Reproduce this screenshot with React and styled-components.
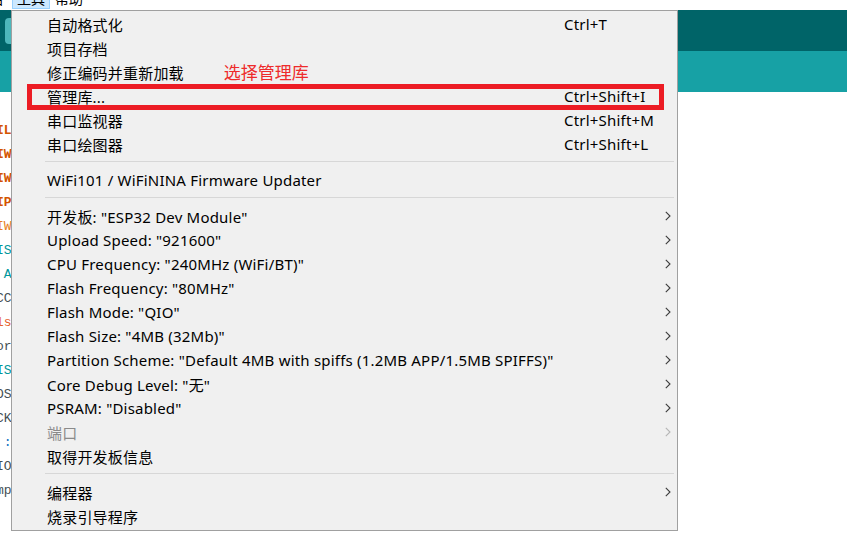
import React from "react";
import styled, { createGlobalStyle } from "styled-components";

const Global = createGlobalStyle`
  html, body { margin: 0; padding: 0; background: #ffffff; }
  body { font-family: "Noto Sans", "Noto Sans CJK SC", sans-serif; }
`;

const Window = styled.div`
  position: relative;
  width: 847px;
  height: 537px;
  overflow: hidden;
  display: flex;
  flex-direction: column;
  background: #ffffff;
`;

const MenuBar = styled.div`
  margin-top: -14px;
  height: 24px;
  flex: none;
  display: flex;
  align-items: flex-start;
  background: #ffffff;
  font-family: "Noto Sans CJK SC", sans-serif;
  font-size: 14px;
  color: #000;
`;

const MenuTitle = styled.div`
  display: flex;
  align-items: center;
  box-sizing: border-box;
  height: 23px;
  padding: 0 ${(p) => p.$pad}px;
  margin-left: ${(p) => p.$ml || 0}px;
  background: ${(p) => (p.$active ? "#cce8ff" : "transparent")};
  border: 1px solid ${(p) => (p.$active ? "#99d1ff" : "transparent")};
`;

const Toolbar = styled.div`
  height: 41px;
  flex: none;
  background: #006468;
  display: flex;
  align-items: center;
  padding-left: 5px;
`;

const ToolButton = styled.div`
  width: 26px;
  height: 26px;
  border-radius: 4px;
  background: #4db7bb;
`;

const TabStrip = styled.div`
  height: 41px;
  flex: none;
  background: #17a1a5;
`;

const Editor = styled.div`
  flex: 1;
  background: #ffffff;
  padding-top: 27px;
  display: flex;
  flex-direction: column;
`;

const CodeLine = styled.div`
  height: 24px;
  line-height: 24px;
  font-family: "Liberation Mono", monospace;
  font-size: 13px;
  white-space: pre;
  margin-left: -4px;
  color: ${(p) => p.$c || "#434f54"};
  font-weight: ${(p) => (p.$b ? 700 : 400)};
`;

const Dropdown = styled.div`
  position: absolute;
  left: 11px;
  top: 10px;
  width: 667px;
  box-sizing: border-box;
  background: #f0f0f0;
  border: 1px solid #a0a0a0;
  padding: 1px 0 2px 0;
  display: flex;
  flex-direction: column;
  font-family: "Noto Sans", "Noto Sans CJK SC", sans-serif;
  font-size: 15px;
  letter-spacing: 0.2px;
  color: #000;
`;

const Item = styled.div`
  display: grid;
  grid-template-columns: 35px 517px 98px 15px;
  height: 24px;
  align-items: center;
  color: ${(p) => (p.$disabled ? "#8a8a8a" : "#000")};
`;

const Label = styled.div`
  grid-column: 2;
  white-space: nowrap;
  display: flex;
  align-items: center;
`;

const Shortcut = styled.div`
  grid-column: 3;
  white-space: nowrap;
`;

const ArrowCell = styled.div`
  grid-column: 4;
  display: flex;
  align-items: center;
  justify-content: flex-start;
  padding-left: 3px;
`;

const Separator = styled.div`
  height: 1px;
  margin: 5px 3px 6px 33px;
  background: #d7d7d7;
`;

const Note = styled.span`
  margin-left: 40px;
  color: #ee2b2b;
  font-family: "Noto Sans CJK SC", sans-serif;
  font-size: 17px;
  letter-spacing: 0;
  line-height: 1;
  margin-top: -2px;
`;

const Highlight = styled.div`
  position: absolute;
  left: 27px;
  top: 84px;
  width: 637px;
  height: 26px;
  box-sizing: border-box;
  border: 5px solid #ec1c24;
  pointer-events: none;
`;

const Chevron = ({ disabled }) => (
  <svg width="6" height="10" viewBox="0 0 6 10">
    <path d="M0.8 0.8 L5 5 L0.8 9.2" fill="none" stroke={disabled ? "#b5b5b5" : "#3c3c3c"} strokeWidth="1.1" />
  </svg>
);

const codeLines = [
  { t: "IL", c: "#d35400", b: true },
  { t: "IW", c: "#d35400", b: true },
  { t: "IW", c: "#d35400", b: true },
  { t: "IP", c: "#d35400", b: true },
  { t: "IW", c: "#e67e22" },
  { t: "IS", c: "#00979c" },
  { t: " A", c: "#00979c" },
  { t: "CC", c: "#434f54" },
  { t: "ls", c: "#e6612a" },
  { t: "or", c: "#434f54" },
  { t: "IS", c: "#00979c" },
  { t: "OS", c: "#434f54" },
  { t: "CK", c: "#434f54" },
  { t: " :", c: "#0a6fc2" },
  { t: "IO", c: "#434f54" },
  { t: "mp", c: "#434f54" },
];

const groups = [
  [
    { label: "自动格式化", sc: "Ctrl+T" },
    { label: "项目存档" },
    { label: "修正编码并重新加载", note: "选择管理库" },
    { label: "管理库...", sc: "Ctrl+Shift+I" },
    { label: "串口监视器", sc: "Ctrl+Shift+M" },
    { label: "串口绘图器", sc: "Ctrl+Shift+L" },
  ],
  [{ label: "WiFi101 / WiFiNINA Firmware Updater" }],
  [
    { label: '开发板: "ESP32 Dev Module"', sub: true },
    { label: 'Upload Speed: "921600"', sub: true },
    { label: 'CPU Frequency: "240MHz (WiFi/BT)"', sub: true },
    { label: 'Flash Frequency: "80MHz"', sub: true },
    { label: 'Flash Mode: "QIO"', sub: true },
    { label: 'Flash Size: "4MB (32Mb)"', sub: true },
    { label: 'Partition Scheme: "Default 4MB with spiffs (1.2MB APP/1.5MB SPIFFS)"', sub: true },
    { label: 'Core Debug Level: "无"', sub: true },
    { label: 'PSRAM: "Disabled"', sub: true },
    { label: "端口", sub: true, disabled: true },
    { label: "取得开发板信息" },
  ],
  [
    { label: "编程器", sub: true },
    { label: "烧录引导程序" },
  ],
];

export default function App() {
  return (
    <>
      <Global />
      <Window>
        <MenuBar>
          <MenuTitle $pad={5} $ml={-30}>项目</MenuTitle>
          <MenuTitle $active $ml={2} $pad={4}>工具</MenuTitle>
          <MenuTitle $pad={4}>帮助</MenuTitle>
        </MenuBar>
        <Toolbar>
          <ToolButton />
        </Toolbar>
        <TabStrip />
        <Editor>
          {codeLines.map((l, i) => (
            <CodeLine key={i} $c={l.c} $b={l.b}>
              {l.t}
            </CodeLine>
          ))}
        </Editor>
        <Dropdown>
          {groups.map((g, gi) => (
            <React.Fragment key={gi}>
              {gi > 0 && <Separator />}
              {g.map((it, i) => (
                <Item key={i} $disabled={it.disabled}>
                  <Label>
                    {it.label}
                    {it.note && <Note>{it.note}</Note>}
                  </Label>
                  {it.sc && <Shortcut>{it.sc}</Shortcut>}
                  {it.sub && (
                    <ArrowCell>
                      <Chevron disabled={it.disabled} />
                    </ArrowCell>
                  )}
                </Item>
              ))}
            </React.Fragment>
          ))}
        </Dropdown>
        <Highlight />
      </Window>
    </>
  );
}
